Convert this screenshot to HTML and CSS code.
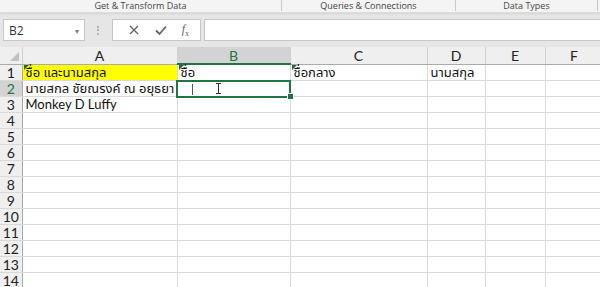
FILE: index.html
```html
<!DOCTYPE html>
<html lang="th">
<head>
    <meta charset="UTF-8">
    <title>Book1 - Excel</title>
    <link rel="stylesheet" href="styles.css">
</head>
<body>
    <div class="ribbon">
        <div class="group g-get">Get &amp; Transform Data</div>
        <div class="group g-queries">Queries &amp; Connections</div>
        <div class="group g-types">Data Types</div>
        <div class="group g-rest"></div>
    </div>

    <div class="formula-bar">
        <div class="name-box">
            <span>B2</span>
            <span class="caret">&#9662;</span>
        </div>
        <div class="grip"></div>
        <div class="fx-box">
            <svg width="12" height="12" viewBox="0 0 12 12"><path d="M2 2 L10 10 M10 2 L2 10" stroke="#666" stroke-width="1.4" fill="none"/></svg>
            <svg width="14" height="12" viewBox="0 0 14 12"><path d="M2 6.5 L5.5 10 L12 2.5" stroke="#666" stroke-width="1.8" fill="none"/></svg>
            <span class="fx"><i>f</i><sub>x</sub></span>
        </div>
        <div class="formula-input"></div>
    </div>

    <table class="sheet">
        <tr class="col-heads">
            <th class="corner"></th>
            <th class="col-a">A</th>
            <th class="col-b active">B</th>
            <th class="col-c">C</th>
            <th class="col-d">D</th>
            <th class="col-e">E</th>
            <th class="col-f">F</th>
        </tr>
        <tr>
            <th>1</th>
            <td class="yellow"><span class="flag"></span>ชื่อ และนามสกุล</td>
            <td><span class="flag"></span>ชื่อ</td>
            <td><span class="flag"></span>ชื่อกลาง</td>
            <td>นามสกุล</td>
            <td></td><td></td>
        </tr>
        <tr>
            <th class="active">2</th>
            <td>นายสกล ชัยณรงค์ ณ อยุธยา</td>
            <td class="selected"><span class="text-caret"></span><span class="ibeam"></span><span class="handle"></span></td>
            <td></td><td></td><td></td><td></td>
        </tr>
        <tr>
            <th>3</th>
            <td>Monkey D Luffy</td>
            <td></td><td></td><td></td><td></td><td></td>
        </tr>
        <tr><th>4</th><td></td><td></td><td></td><td></td><td></td><td></td></tr>
        <tr><th>5</th><td></td><td></td><td></td><td></td><td></td><td></td></tr>
        <tr><th>6</th><td></td><td></td><td></td><td></td><td></td><td></td></tr>
        <tr><th>7</th><td></td><td></td><td></td><td></td><td></td><td></td></tr>
        <tr><th>8</th><td></td><td></td><td></td><td></td><td></td><td></td></tr>
        <tr><th>9</th><td></td><td></td><td></td><td></td><td></td><td></td></tr>
        <tr><th>10</th><td></td><td></td><td></td><td></td><td></td><td></td></tr>
        <tr><th>11</th><td></td><td></td><td></td><td></td><td></td><td></td></tr>
        <tr><th>12</th><td></td><td></td><td></td><td></td><td></td><td></td></tr>
        <tr><th>13</th><td></td><td></td><td></td><td></td><td></td><td></td></tr>
        <tr><th>14</th><td></td><td></td><td></td><td></td><td></td><td></td></tr>
    </table>
</body>
</html>
```

FILE: styles.css
```css
body {
    margin: 0;
    width: 600px;
    height: 287px;
    overflow: hidden;
    background-color: #fff;
    font-family: "Open Sans", "Noto Sans", sans-serif;
}
.ribbon {
    display: flex;
    height: 12px;
    background-color: #f4f4f4;
    border-bottom: 1px solid #dcdcdc;
    box-shadow: 0 1px 2px rgba(0, 0, 0, 0.08);
    position: relative;
    z-index: 1;
}
.ribbon .group {
    font-size: 9px;
    line-height: 11px;
    color: #444;
    text-align: center;
    border-right: 1px solid #c8c8c8;
    height: 11px;
    white-space: nowrap;
}
.g-get { width: 281px; }
.g-queries { width: 173px; }
.g-types { width: 141px; }
.g-rest { flex: 1; border-right: none !important; }

.formula-bar {
    display: flex;
    align-items: center;
    height: 34px;
    background-color: #e6e6e6;
    padding: 0 0 0 3px;
}
.name-box {
    display: flex;
    justify-content: space-between;
    align-items: center;
    box-sizing: border-box;
    width: 82px;
    height: 22px;
    background-color: #fff;
    border: 1px solid #c6c6c6;
    padding: 0 5px 0 5px;
    font-size: 12px;
    color: #333;
}
.name-box .caret {
    font-size: 8px;
    color: #777;
}
.grip {
    width: 2px;
    height: 9px;
    margin: 0 11px 0 12px;
    border-left: 2px dotted #b0b0b0;
}
.fx-box {
    display: flex;
    align-items: center;
    justify-content: space-around;
    box-sizing: border-box;
    width: 89px;
    height: 22px;
    background-color: #fff;
    border: 1px solid #c6c6c6;
    padding: 0 4px 0 8px;
}
.fx {
    font-family: "Liberation Serif", serif;
    font-size: 12px;
    color: #666;
}
.fx sub {
    font-size: 8px;
}
.formula-input {
    flex: 1;
    height: 22px;
    margin-left: 3px;
    box-sizing: border-box;
    background-color: #fff;
    border: 1px solid #c6c6c6;
    border-right: none;
}

.sheet {
    border-collapse: collapse;
    table-layout: fixed;
    width: 603px;
    font-family: Lato, "Noto Sans Thai", "Noto Sans", sans-serif;
}
.sheet th,
.sheet td {
    height: 16px;
    padding: 0;
    box-sizing: border-box;
    white-space: nowrap;
}
.sheet th {
    background-color: #efefef;
    color: #222;
    font-weight: normal;
    font-size: 14px;
    line-height: 15px;
    text-align: center;
    border-right: 1px solid #ababab;
    border-bottom: 1px solid #dadada;
}
.sheet tr:first-child th {
    border-right: 1px solid #d0d0d0;
    border-bottom: 1px solid #ababab;
    height: 17px;
}
.sheet th.active {
    background-color: #d3d3d3;
    color: #217346;
}
.sheet tr:first-child th.active {
    border-bottom: 2px solid #217346;
}
.corner {
    width: 22px;
    position: relative;
}
.corner::after {
    content: "";
    position: absolute;
    right: 3px;
    bottom: 3px;
    border-left: 9px solid transparent;
    border-bottom: 9px solid #c0c0c0;
}
.col-a { width: 155px; }
.col-b { width: 113px; }
.col-c { width: 137px; }
.col-d { width: 58px; }
.col-e { width: 60px; }
.col-f { width: 58px; }

.sheet td {
    font-size: 13px;
    line-height: 15px;
    color: #111;
    padding-left: 3px;
    overflow: visible;
    border-right: 1px solid #dadada;
    border-bottom: 1px solid #dadada;
    position: relative;
}
.sheet td.yellow {
    background-color: #ffff00;
}
.flag {
    position: absolute;
    left: 1px;
    top: 0;
    border-right: 5px solid transparent;
    border-top: 5px solid #1f6b3a;
}
.sheet td.selected {
    outline: 2px solid #217346;
    outline-offset: -1px;
}
.text-caret {
    position: absolute;
    left: 14px;
    top: 3px;
    width: 1px;
    height: 11px;
    background-color: #555;
}
.ibeam {
    position: absolute;
    left: 40px;
    top: 2px;
    width: 1px;
    height: 11px;
    background-color: #333;
}
.ibeam::before,
.ibeam::after {
    content: "";
    position: absolute;
    left: -2px;
    width: 5px;
    height: 1px;
    background-color: #333;
}
.ibeam::before { top: 0; }
.ibeam::after { bottom: 0; }
.handle {
    position: absolute;
    right: -4px;
    bottom: -4px;
    width: 5px;
    height: 5px;
    background-color: #217346;
    border: 1px solid #fff;
}
```
